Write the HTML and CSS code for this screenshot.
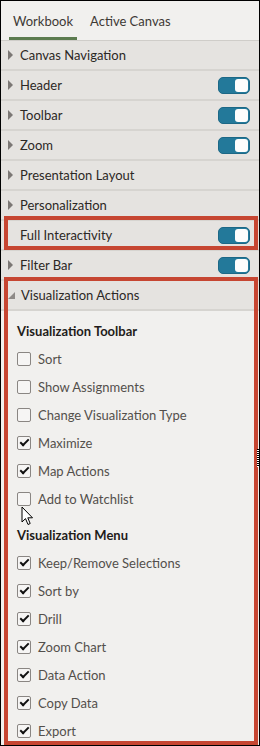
FILE: index.html
```html
<!DOCTYPE html>
<html lang="en">
<head>
  <meta charset="UTF-8">
  <title>Workbook Properties</title>
  <link rel="stylesheet" href="styles.css">
</head>
<body>
  <div class="panel">
    <div class="tabs">
      <div class="tab active">Workbook</div>
      <div class="tab">Active Canvas</div>
    </div>

    <div class="row"><span class="caret"></span><span class="label">Canvas Navigation</span></div>
    <div class="row"><span class="caret"></span><span class="label">Header</span><span class="switch"></span></div>
    <div class="row"><span class="caret"></span><span class="label">Toolbar</span><span class="switch"></span></div>
    <div class="row"><span class="caret"></span><span class="label">Zoom</span><span class="switch"></span></div>
    <div class="row"><span class="caret"></span><span class="label">Presentation Layout</span></div>
    <div class="row"><span class="caret"></span><span class="label">Personalization</span></div>
    <div class="row plain marked"><span class="label">Full Interactivity</span><span class="switch"></span></div>
    <div class="row"><span class="caret"></span><span class="label">Filter Bar</span><span class="switch"></span></div>

    <section class="group marked">
      <div class="row open"><span class="caret down"></span><span class="label">Visualization Actions</span></div>
      <div class="group-body">
        <h3>Visualization Toolbar</h3>
        <ul class="checks">
          <li><span class="box"></span>Sort</li>
          <li><span class="box"></span>Show Assignments</li>
          <li><span class="box"></span>Change Visualization Type</li>
          <li><span class="box on"></span>Maximize</li>
          <li><span class="box on"></span>Map Actions</li>
          <li><span class="box"></span>Add to Watchlist</li>
        </ul>
        <h3>Visualization Menu</h3>
        <ul class="checks">
          <li><span class="box on"></span>Keep/Remove Selections</li>
          <li><span class="box on"></span>Sort by</li>
          <li><span class="box on"></span>Drill</li>
          <li><span class="box on"></span>Zoom Chart</li>
          <li><span class="box on"></span>Data Action</li>
          <li><span class="box on"></span>Copy Data</li>
          <li><span class="box on"></span>Export</li>
        </ul>
      </div>
    </section>

    <!-- mouse pointer and resize grip sit over the panel -->
    <svg class="pointer" width="13" height="20" viewBox="0 0 13 20">
      <path d="M1 1 L1 16 L4.5 12.6 L7 18.5 L9.2 17.5 L6.8 11.8 L11.5 11.8 Z" fill="#fff" stroke="#000" stroke-width="1" stroke-linejoin="round"/>
    </svg>
    <div class="grip"></div>
  </div>
</body>
</html>
```

FILE: styles.css
```css
body {
  margin: 0;
  font-family: Lato, "Open Sans", sans-serif;
}

.panel {
  position: relative;
  display: flex;
  flex-direction: column;
  width: 260px;
  height: 746px;
  box-sizing: border-box;
  border: 1px solid #000;
  background: #f1f0ee;
  overflow: hidden;
}

/* Tabs */
.tabs {
  display: flex;
  gap: 9px;
  flex: none;
  height: 40px;
  box-sizing: border-box;
  padding-left: 8px;
  border-bottom: 1px solid #cfcdc9;
}

.tab {
  display: flex;
  align-items: center;
  padding: 3px 4px 0;
  font-size: 13px;
  color: #3e3935;
  border-bottom: 3px solid transparent;
}

.tab.active {
  border-bottom-color: #5c7b4f;
}

/* Accordion rows */
.row {
  display: flex;
  align-items: center;
  flex: none;
  height: 28px;
  padding: 0 9px 0 7px;
  border-bottom: 2px solid #d6d4d0;
  background: #e5e3e0;
  font-size: 13px;
  color: #2c2825;
}

.caret {
  width: 0;
  height: 0;
  margin-right: 7px;
  border-left: 5px solid #7b7774;
  border-top: 5px solid transparent;
  border-bottom: 5px solid transparent;
}

.caret.down {
  margin-right: 6px;
  border-top: 0;
  border-left: 7px solid transparent;
  border-bottom: 7px solid #8e8a87;
}

.row.plain .label {
  margin-left: 12px;
}

.switch {
  position: relative;
  margin-left: auto;
  width: 32px;
  height: 17px;
  box-sizing: border-box;
  border: 1px solid #1c6886;
  border-radius: 5px;
  background: #23799a;
}

.switch::after {
  content: "";
  position: absolute;
  top: 1px;
  right: 1px;
  width: 13px;
  height: 13px;
  border-radius: 3px;
  background: #fdfdfc;
}

/* Red callout boxes */
.marked {
  position: relative;
}

.marked::after {
  content: "";
  position: absolute;
  top: -5px;
  left: 3px;
  right: 1px;
  bottom: -1px;
  border: 4px solid #c64632;
  pointer-events: none;
}

.group {
  flex: 1;
  min-height: 0;
}

.group::after {
  top: -4px;
  bottom: 0;
}

.group-body {
  padding: 7px 0 0 16px;
}

.group-body h3 {
  margin: 0;
  height: 27px;
  line-height: 27px;
  font-size: 13px;
  font-weight: bold;
  color: #1f1c1a;
}

.checks {
  list-style: none;
  margin: 0 0 9px;
  padding: 0;
}

.checks li {
  display: flex;
  align-items: center;
  height: 28px;
  font-size: 13px;
  color: #534f4b;
}

.box {
  position: relative;
  width: 14px;
  height: 14px;
  box-sizing: border-box;
  margin-right: 7px;
  border: 1px solid #8a8683;
  border-radius: 2px;
  background: #f6f5f4;
}

.box.on::after {
  content: "";
  position: absolute;
  top: 2px;
  left: 2px;
  width: 7px;
  height: 3px;
  border-left: 2px solid #111;
  border-bottom: 2px solid #111;
  transform: rotate(-45deg);
}

.pointer {
  position: absolute;
  left: 20px;
  top: 505px;
}

.grip {
  position: absolute;
  right: 0;
  top: 448px;
  width: 2px;
  height: 18px;
  background: repeating-linear-gradient(#000 0 1px, #fff 1px 2px);
}
```
